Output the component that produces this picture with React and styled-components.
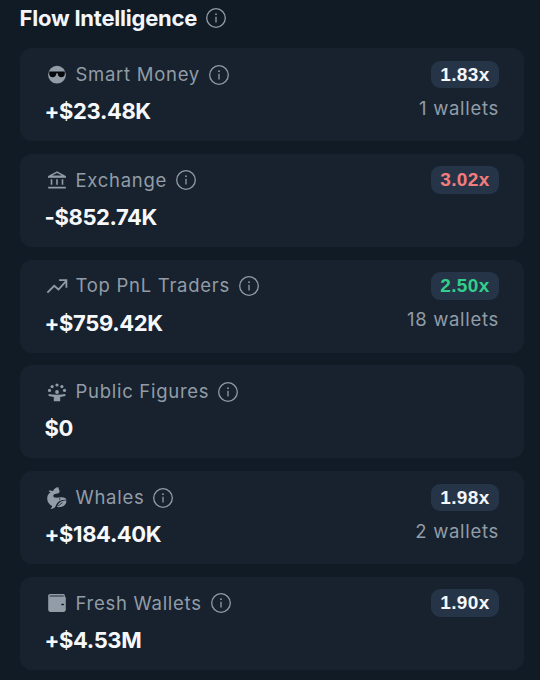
/* eslint-disable react/prop-types */
import styled, { createGlobalStyle } from "styled-components"

const GlobalStyle = createGlobalStyle`
  * { box-sizing: border-box; }
  body {
    margin: 0;
    background-color: #111b25;
    font-family: Inter, "Liberation Sans", sans-serif;
    overflow: hidden;
  }
  svg { display: block; flex-shrink: 0; }
  p { margin: 0; }
`
const Panel = styled.section`
  width: 540px;
  height: 680px;
  padding: 3.4px 16px 0 20px;
  overflow: hidden;
`
const Header = styled.header`
  display: flex;
  align-items: center;
  gap: 9px;
  height: 30px;
  margin-bottom: 14.8px;
`
const Title = styled.h2`
  margin: 0 0 0 -0.5px;
  font-size: 22px;
  font-weight: 700;
  line-height: 30px;
  letter-spacing: -0.22px;
  color: #f3f6fa;
`
const List = styled.div`
  display: flex;
  flex-direction: column;
  gap: 12.75px;
`
const Card = styled.article`
  display: flex;
  justify-content: space-between;
  height: 93px;
  padding: 12.5px 25px 0 24.5px;
  border-radius: 12px;
  background-color: #17222e;
`
const Label = styled.div`
  display: flex;
  align-items: center;
  height: 28px;
  padding-left: 1.5px;
  color: #929ca7;
  span {
    margin: 0 9px 0 7.5px;
    font-size: 18.5px;
    line-height: 27.4px;
    letter-spacing: 0.72px;
  }
`
const Amount = styled.p`
  margin-top: 7.5px;
  font-size: 22px;
  font-weight: 700;
  line-height: 30px;
  letter-spacing: -0.38px;
  color: #f6f8fb;
`
const Side = styled.div`
  display: flex;
  flex-direction: column;
  align-items: flex-end;
`
const Badge = styled.div`
  width: 68px;
  height: 27.5px;
  border-radius: 9px;
  background-color: #263447;
  font-family: "Liberation Sans", Arial, sans-serif;
  font-size: 19px;
  font-weight: 700;
  line-height: 28px;
  letter-spacing: 0.4px;
  text-align: center;
  color: ${({ $color }) => $color || "#f3f6fa"};
`
const Wallets = styled.p`
  margin-top: 6.5px;
  font-size: 18.5px;
  line-height: 26px;
  letter-spacing: 0.7px;
  color: #929ca7;
`

function InfoIcon() {
  return (
    <svg width="20" height="20" viewBox="0 0 20 20" fill="none" stroke="#929ca7">
      <circle cx="10" cy="10" r="9.3" strokeWidth="1.3" />
      <path d="M10 8.7V14.5" strokeWidth="1.3" />
      <circle cx="10" cy="6.2" r="0.9" fill="#929ca7" stroke="none" />
    </svg>
  )
}

const icons = {
  smart: (
    <>
      <circle cx="11" cy="10.7" r="8.9" fill="currentColor" />
      <path d="M3.2 7.6h15.6v1.8c0 2.2-1.2 3.900-3.500 3.900-2.200 0-3.400-1.500-3.700-4.100h-1.200c-.3 2.600-1.500 4.100-3.700 4.100-2.300 0-3.500-1.700-3.500-3.900z" fill="#05070b" />
    </>
  ),
  exchange: (
    <g fill="none" stroke="currentColor" strokeWidth="1.6">
      <path d="M3 7.4 11 3.1l8 4.3z" strokeLinejoin="round" />
      <path d="M2 8h18M5.5 10.2v5.6M11 10.2v5.6M16.5 10.2v5.6M2.2 18.6h17.6" />
    </g>
  ),
  traders: (
    <g fill="none" stroke="currentColor" strokeWidth="1.8">
      <path d="M1.4 17.6 8.2 10.8l4.3 3.7L20.3 5.8" />
      <path d="M13.1 5.2h7.3v7.6" />
    </g>
  ),
  figures: (
    <g fill="currentColor">
      <circle cx="3.5" cy="9.4" r="1.6" />
      <circle cx="6.1" cy="5.6" r="1.6" />
      <circle cx="11" cy="4" r="1.6" />
      <circle cx="15.9" cy="5.6" r="1.6" />
      <circle cx="18.5" cy="9.4" r="1.6" />
      <circle cx="11" cy="11" r="1.9" />
      <path d="M2.6 13.1c2.4.5 5.2.7 8.4.7s6-.2 8.400-.7v2l-5.200.8v4.400H7.800v-4.400l-5.200-.8z" />
    </g>
  ),
  whales: (
    <>
      <path
        d="M12.4.2c.3 1.200.3 2 .8 2.900.8 1.300.4 2.500-.8 3.200-1.300.700-2.900.300-4.200 1-1.300.8-1.200 2.700.5 3.200 2 .5 4.500-.4 7-.2 2.600.2 4.500.9 4.700 2.400-3.900-.2-6.700.5-8.700 2.700-1.100 1.200-1.600 2.800-2.500 4.400-1 1.500-2.700 2.300-4.800 2.100 1.200-.9 1.700-1.800 1.700-2.900C3.300 17.700 1.200 14.800 1.200 11.400c0-2.600 1.200-4.700 3.300-6.100-.900-.2-1.500-.7-1.900-1.600 1.500-.4 3-.2 4.600.3C7.700 1.800 9.600.4 12.400.2z"
        fill="currentColor"
      />
      <path d="M20.500 13.500c-4.900-.1-8 1.900-9.600 6.500 5 .7 9.500-1.500 9.600-6.500z" fill="currentColor" />
      <path d="m11.700 19.200 4.900-3.600" stroke="#17222e" strokeWidth=".8" />
      <circle cx="13.700" cy="12" r=".7" fill="#17222e" />
    </>
  ),
  fresh: (
    <>
      <path d="M4 2h13.3c1 0 1.5.6 1.5 1.5v1.1c.7.3 1 .8 1 1.7V17.500c0 1.500-.9 2.400-2.400 2.400H4.600c-1.500 0-2.400-.9-2.400-2.400V3.800C2.200 2.700 2.900 2 4 2z" fill="currentColor" />
      <path d="M3.700 4h14" stroke="#17222e" strokeWidth=".9" />
      <path d="M15.900 12.500h1.500" stroke="#17222e" strokeWidth="1.500" strokeLinecap="round" />
    </>
  ),
}

const flows = [
  { icon: "smart", name: "Smart Money", amount: "+$23.48K", ratio: "1.83x", wallets: 1 },
  { icon: "exchange", name: "Exchange", amount: "-$852.74K", ratio: "3.02x", color: "#f57c7c" },
  { icon: "traders", name: "Top PnL Traders", amount: "+$759.42K", ratio: "2.50x", color: "#31cf8b", wallets: 18 },
  { icon: "figures", name: "Public Figures", amount: "$0" },
  { icon: "whales", name: "Whales", amount: "+$184.40K", ratio: "1.98x", wallets: 2 },
  { icon: "fresh", name: "Fresh Wallets", amount: "+$4.53M", ratio: "1.90x" },
]

function FlowCard({ flow }) {
  return (
    <Card>
      <div>
        <Label>
          <svg width="22" height="22" viewBox="0 0 22 22">{icons[flow.icon]}</svg>
          <span>{flow.name}</span>
          <InfoIcon />
        </Label>
        <Amount>{flow.amount}</Amount>
      </div>
      <Side>
        {flow.ratio && <Badge $color={flow.color}>{flow.ratio}</Badge>}
        {flow.wallets && <Wallets>{flow.wallets} wallets</Wallets>}
      </Side>
    </Card>
  )
}

function App() {
  return (
    <Panel>
      <GlobalStyle />
      <Header>
        <Title>Flow Intelligence</Title>
        <InfoIcon />
      </Header>
      <List>
        {flows.map((flow) => <FlowCard key={flow.name} flow={flow} />)}
      </List>
    </Panel>
  )
}
export default App
